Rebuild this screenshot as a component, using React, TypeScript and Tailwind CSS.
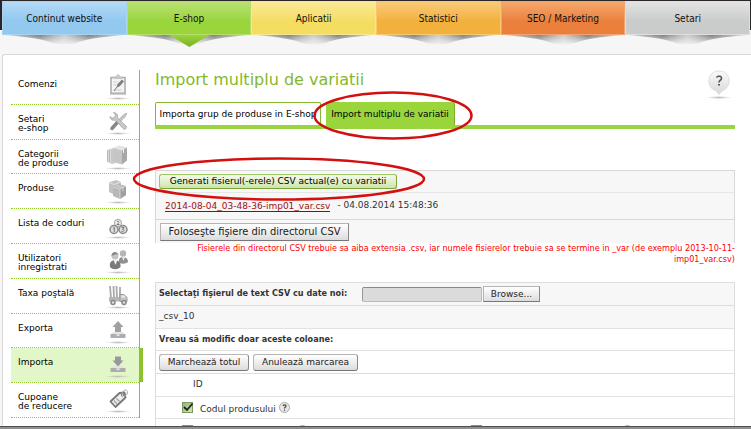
import type { ReactNode } from "react";
import clsx from "clsx";

const tabs = [
  { label: "Continut website", className: "border-[#a9d3f3] bg-linear-to-b from-[#b3d9f7] to-[#93c8ef] to-60%" },
  { label: "E-shop", className: "border-[#b4dd6e] bg-linear-to-b from-[#b9e070] to-[#9ad53c] to-60%", active: true },
  { label: "Aplicatii", className: "border-[#f9e694] bg-linear-to-b from-[#fae996] to-[#f5dd62] to-60%" },
  { label: "Statistici", className: "border-[#f6c876] bg-linear-to-b from-[#f8ca76] to-[#f2b13c] to-60%" },
  { label: "SEO / Marketing", className: "border-[#f3a371] bg-linear-to-b from-[#f5a86c] to-[#eb803c] to-60%" },
  { label: "Setari", className: "border-[#dedfde] bg-linear-to-b from-[#e2e3e2] to-[#cacccb] to-60%" },
];

function IconFrame({ children }: { children: ReactNode }) {
  return (
    <svg viewBox="0 0 30 32" className="h-8 w-[30px] shrink-0" fill="none" aria-hidden="true">
      <ellipse cx="15" cy="28.5" rx="13" ry="1.4" fill="url(#iconShadow)" />
      {children}
    </svg>
  );
}

const icons = {
  orders: (
    <>
      <path d="M8 7.500h14v16H8z" fill="#f4f4f4" stroke="#aaa" strokeWidth="1.500" />
      <path d="M7 22.500h16v2H7z" fill="#b5b5b5" />
      <path d="M11 6.500h8v2.500h-8z" fill="#c4c4c4" />
      <path d="M13.500 6.500a1.500 1.500 0 0 1 3 0" stroke="#aaa" />
      <path d="M10.500 12h4M10.500 15h3M10.500 20h8" stroke="#ccc" />
      <path d="m11 21 3-4" stroke="#777" />
      <path d="m13.500 17.500 1-3.500 4.500-4.500 2 2-4.500 5z" fill="#808080" />
    </>
  ),
  settings: (
    <>
      <path d="m9 23.500 7-8" stroke="#888" strokeWidth="3.500" strokeLinecap="round" />
      <path d="m14.500 16 6-6.500 3.500-1.500-1.500 3.500-6 6z" fill="#c4c4c4" stroke="#aaa" strokeWidth=".6" />
      <path
        d="M7 11.500c0 3 3 4.500 5.500 3.500l7.500 8.500c2 2 4.500-.5 3-2.500L14.500 13c1-3-1-5.500-4-5.500l2 2.500-1 2.500-2.500.5z"
        fill="#c8c8c8"
        stroke="#a5a5a5"
        strokeWidth=".8"
      />
    </>
  ),
  categories: (
    <>
      <path d="m4 10 6-2 4 2v13l-5 1-5-2z" fill="#dadada" />
      <path d="M4.500 10v12M6.500 9.500v13M9 9v15" stroke="#b8b8b8" />
      <path d="m10 8 6-2.500 8 2-5 3z" fill="#dedede" />
      <path d="m10 8 9 2.500v14L10 22z" fill="#c6c6c6" />
      <path d="m19 10.500 5-3v13l-5 4z" fill="#a8a8a8" />
      <path d="m13.500 7 7 2v4" stroke="#eee" />
    </>
  ),
  products: (
    <>
      <path d="m6 8.500 7-2.500 5 2v9l-6 4-6-3z" fill="#c2c2c2" />
      <path d="m6 8.500 5 2 7-2.500" stroke="#e0e0e0" />
      <path d="m10 13 6-3 7 2v9l-6 4-7-3z" fill="#b8b8b8" />
      <path d="m17 15 6-3v9l-6 4z" fill="#a0a0a0" />
      <path d="m10 13 7 2 6-3M17 15v10M13 11.500l7 2v4" stroke="#ddd" strokeWidth=".8" />
    </>
  ),
  codes: (
    <>
      <circle cx="15" cy="14" r="3.500" fill="#eee" stroke="#b5b5b5" strokeWidth="1.300" />
      <circle cx="11" cy="20.500" r="4" fill="#ddd" stroke="#8a8a8a" strokeWidth="1.500" />
      <circle cx="20" cy="20.500" r="4" fill="#ddd" stroke="#8a8a8a" strokeWidth="1.500" />
      <path d="M14 13c1-1.500 2.500 0 1.500 1L14 15.500h2.500M10 19.500l1.300-1v4.500M18.500 18.500h2.500l-1.500 2c2.500 0 1.500 2.500-1 2" stroke="#777" />
    </>
  ),
  users: (
    <>
      <circle cx="20" cy="9.500" r="3.200" fill="#b5b5b5" />
      <path d="M16 19c-1-5 2-6 4-6s5 1 5 5c-2 2-6 2-9 1z" fill="#909090" />
      <path d="m19 13 1.500 4 1.500-4z" fill="#eee" />
      <circle cx="12" cy="12" r="3.500" fill="#c4c4c4" />
      <path d="M8.500 12c0-5 6-5 7-1l-2-1z" fill="#888" />
      <path d="M7 23c-1-5 2-7 5-7s6 2 5.500 7c-3 3-8 3-10.500 0z" fill="#7a7a7a" />
      <path d="m10.500 16 2 5 2-5z" fill="#eee" />
    </>
  ),
  shipping: (
    <>
      <path d="M8 19 7 7M11 19l-.5-12M14 19l-.500-12M17 19V8" stroke="#aaa" strokeWidth="1.800" />
      <path d="M6 18h12v4.500H6z" fill="#b5b5b5" />
      <path d="M17 15.500h4l3 3v4h-7z" fill="#c6c6c6" stroke="#999" />
      <path d="M18.500 16.500H21l1.500 2h-4z" fill="#eee" />
      <circle cx="10" cy="23.500" r="2" fill="#ddd" stroke="#888" strokeWidth="1.500" />
      <circle cx="21" cy="23.500" r="2" fill="#ddd" stroke="#888" strokeWidth="1.500" />
    </>
  ),
  exporting: (
    <>
      <path d="m15 7 5.500 6H18v5.500h-6V13H9.500z" fill="#a0a0a0" />
      <path d="m10 18-2 2.500h14L20 18z" fill="#e4e4e4" />
      <path d="M7.500 20h15v4h-15z" fill="#adadad" />
      <path d="M12.500 20.500h5l-2.500 2z" fill="#eee" />
    </>
  ),
  importing: (
    <>
      <path d="m10 18-2 2.500h14L20 18z" fill="#e4e4e4" />
      <path d="M7.500 20h15v4h-15z" fill="#adadad" />
      <path d="M12.500 20.500h5l-2.500 2z" fill="#eee" />
      <path d="M12 8.500h6v4h2.500L15 18.500l-5.500-6H12z" fill="#999" />
    </>
  ),
  coupons: (
    <>
      <path d="m7.500 18.500 9-8.500 5-.5 1 5-10 9.500z" fill="#eee" stroke="#777" strokeWidth="1.800" strokeLinejoin="round" />
      <path d="m11 17.500 3 3.500M13.500 15.500l3 3" stroke="#aaa" strokeWidth="1.500" />
      <circle cx="19.500" cy="12" r="1.200" fill="#fff" stroke="#777" />
      <path d="M19.500 11.500c-1-4 4-6 5-3 .5 2-1 4-3 4" stroke="#aaa" />
    </>
  ),
};

const menu = [
  { label: <>Comenzi</>, icon: icons.orders },
  { label: <>Setari<br />e-shop</>, icon: icons.settings },
  { label: <>Categorii<br />de produse</>, icon: icons.categories },
  { label: <>Produse</>, icon: icons.products },
  { label: <>Lista de coduri</>, icon: icons.codes },
  { label: <>Utilizatori<br />inregistrati</>, icon: icons.users },
  { label: <>Taxa poştală</>, icon: icons.shipping },
  { label: <>Exporta</>, icon: icons.exporting },
  { label: <>Importa</>, icon: icons.importing, active: true },
  { label: <>Cupoane<br />de reducere</>, icon: icons.coupons },
];

function TopNav() {
  return (
    <nav className="grid grid-cols-6 pl-[2px] pr-px font-['DejaVu_Sans_Condensed','DejaVu_Sans',sans-serif] text-[10px] text-[#111]">
      {tabs.map((tab) => (
        <div key={tab.label}>
          <a href="#" className={clsx("flex h-[34px] items-center justify-center border", tab.className)}>
            {tab.label}
          </a>
          <svg viewBox="0 0 124 14" preserveAspectRatio="none" className="block h-[14px] w-full" aria-hidden="true">
            <path d="M2 0h120Q84 3 74 8Q62 11 50 8Q40 3 2 0z" fill="url(#tabShadow)" />
            <path d="M0 0h124v12H0z" fill="url(#tabFade)" />
            {tab.active && <path d="M42 0h40L62 12z" fill="url(#tabPointer)" />}
          </svg>
        </div>
      ))}
    </nav>
  );
}

function Sidebar() {
  return (
    <aside className="mt-[15px] ml-2 h-[348px] w-[129px] shrink-0 border-r border-[#8bbf30]">
      <ul className="grid h-full grid-rows-10">
        {menu.map((item, i) => (
          <li key={i} className="relative min-h-0 border-b border-dotted border-[#8ecb2b]">
            <a
              href="#"
              className={clsx(
                "flex h-full items-start justify-between overflow-hidden pr-[6px] pl-[7px] text-black",
                item.active && "bg-[#e2f7c8]"
              )}
            >
              <span className="pt-[10px] leading-[9px] whitespace-nowrap">{item.label}</span>
              <IconFrame>{item.icon}</IconFrame>
            </a>
            {item.active && <span className="absolute inset-y-0 -right-1 w-1 bg-[#8cc22f]" />}
          </li>
        ))}
      </ul>
    </aside>
  );
}

function Button({ children, className }: { children: ReactNode; className?: string }) {
  return (
    <button
      type="button"
      className={clsx(
        "border border-[#b5b5b5] border-r-[#888] border-b-[#777] bg-linear-to-b from-white to-[#dcdcdc] whitespace-nowrap text-[#222]",
        className
      )}
    >
      {children}
    </button>
  );
}

function Checkbox({ id, label }: { id: string; label?: string }) {
  return (
    <span className="grid size-[11px] shrink-0">
      <input
        id={id}
        type="checkbox"
        defaultChecked
        aria-label={label}
        className="col-start-1 row-start-1 size-[11px] appearance-none border border-[#7c9a62] bg-linear-to-br from-[#8fb56d] to-[#d3e6bf]"
      />
      <svg viewBox="0 0 11 11" className="pointer-events-none col-start-1 row-start-1 size-[11px] overflow-visible" fill="none" aria-hidden="true">
        <path d="m2 5 3 3L10.500 1.500" stroke="#222" strokeWidth="1.800" />
      </svg>
    </span>
  );
}

function HelpButton() {
  return (
    <button type="button" aria-label="?" className="size-[11px] shrink-0">
      <svg viewBox="0 0 11 11" className="size-[11px]" fill="none" aria-hidden="true">
        <circle cx="5.500" cy="5.500" r="5" fill="#e8e8e8" stroke="#aaa" />
        <path d="M4 4c.3-1.600 3.200-1.500 3 .1C6.900 5.200 5.500 5 5.500 6.600M5.500 7.500v1.200" stroke="#444" strokeWidth="1.200" />
      </svg>
    </button>
  );
}

function HelpPin() {
  return (
    <button type="button" aria-label="?" className="mr-[3px] h-[30px] w-[26px]">
      <svg viewBox="0 0 26 30" fill="none" aria-hidden="true">
        <ellipse cx="13" cy="27.500" rx="13" ry="1.500" fill="url(#iconShadow)" />
        <path d="M13 24.500 10 21C-1 17 1 1 13 1s14 16 3 20z" fill="url(#pinFill)" stroke="#dedede" />
        <path d="M10.500 7.500c1-2 5.500-1.500 5 1-.5 2-2.500 2-2.500 4" stroke="#555" strokeWidth="1.600" />
        <path d="M12 14h2v1.500h-2z" fill="#555" />
      </svg>
    </button>
  );
}

function GeneratedFiles() {
  return (
    <section className="mt-[41px] border border-b-0 border-[#d8d8d8] bg-[#f7f7f7]">
      <div className="flex h-[22px] items-center border-b border-[#e6e6e6] pl-[3px]">
        <button
          type="button"
          className="h-[15px] w-[238px] rounded-[3px] border border-[#9bc860] border-r-[#7ba336] border-b-[#7ba336] bg-linear-to-b from-[#f5faee] to-[#cde5a8] leading-none text-black"
        >
          Generati fisierul(-erele) CSV actual(e) cu variatii
        </button>
      </div>
      <div className="flex h-[27px] items-center gap-[7px] border-b border-[#d8d8d8] pl-[9px]">
        <a href="#" className="border-b border-[#a00] leading-[10px] text-[#a01010]">
          2014-08-04_03-48-36-imp01_var.csv
        </a>
        <span>- 04.08.2014 15:48:36</span>
      </div>
      <div className="flex h-[23px] items-center pl-1">
        <Button className="h-[18px] w-[189px] font-['DejaVu_Sans_Condensed','DejaVu_Sans',sans-serif] text-[11px] leading-none">
          Foloseşte fişiere din directorul CSV
        </Button>
      </div>
    </section>
  );
}

function ImportForm() {
  return (
    <form className="mt-[17px] border border-b-0 border-[#dcdcdc]">
      <div className="flex h-[23px] items-center border-b border-[#dcdcdc] bg-[#f7f7f7] pl-[3px]">
        <label
          htmlFor="csv"
          className="w-[203px] font-['DejaVu_Sans_Condensed','DejaVu_Sans',sans-serif] font-bold whitespace-nowrap"
        >
          Selectaţi fişierul de text CSV cu date noi:
        </label>
        <input
          id="csv"
          readOnly
          className="h-[15px] w-[120px] rounded-[2px] border border-[#bbb] border-t-[#888] border-l-[#999] bg-[#dbdbdb]"
        />
        <Button className="ml-px h-4 w-[57px] leading-none">Browse...</Button>
      </div>
      <div className="flex h-[23px] items-center border-b border-[#e2e2e2] bg-[#f7f7f7] pl-[3px]">_csv_10</div>
      <div className="flex h-[22px] items-center border-b border-[#e2e2e2] pl-[3px] font-['DejaVu_Sans_Condensed','DejaVu_Sans',sans-serif] font-bold">
        Vreau să modific doar aceste coloane:
      </div>
      <div className="flex h-[23px] items-center gap-1 border-b border-[#dcdcdc] pl-[3px]">
        <Button className="h-[17px] w-[90px] rounded-[3px] leading-none">Marchează totul</Button>
        <Button className="h-[17px] w-[105px] rounded-[3px] leading-none">Anulează marcarea</Button>
      </div>
      <div className="flex h-[23px] items-center border-b border-[#e2e2e2] pl-[37px]">ID</div>
      <div className="flex h-[22px] items-center border-b border-[#e2e2e2] pl-[26px]">
        <Checkbox id="code" />
        <label htmlFor="code" className="mr-[3px] ml-[7px] pt-1">
          Codul produsului
        </label>
        <HelpButton />
      </div>
      <div className="grid grid-cols-2 pt-[6px] pl-[26px]">
        <div className="flex gap-[104px]">
          <Checkbox id="col-1" label="1" />
          <HelpButton />
        </div>
        <div className="flex gap-[140px] pl-[13px]">
          <Checkbox id="col-2" label="2" />
          <HelpButton />
        </div>
      </div>
    </form>
  );
}

export default function App() {
  return (
    <div className="flex h-screen flex-col overflow-hidden bg-[#f6f6f6] font-['DejaVu_Sans',Verdana,sans-serif] text-[9px] text-[#333]">
      {/* Shared gradients */}
      <svg className="absolute size-0" aria-hidden="true">
        <defs>
          <radialGradient id="iconShadow">
            <stop offset="0" stopColor="#bbb" />
            <stop offset="1" stopColor="#bbb" stopOpacity="0" />
          </radialGradient>
          <linearGradient id="tabShadow">
            <stop offset="0" stopColor="#777" stopOpacity="0.200" />
            <stop offset="0.300" stopColor="#808080" />
            <stop offset="0.500" stopColor="#bbb" stopOpacity="0.700" />
            <stop offset="0.700" stopColor="#808080" />
            <stop offset="1" stopColor="#777" stopOpacity="0.200" />
          </linearGradient>
          <linearGradient id="tabFade" x2="0" y2="1">
            <stop offset="0" stopColor="#f6f6f6" stopOpacity="0" />
            <stop offset="0.800" stopColor="#f6f6f6" stopOpacity="0.900" />
            <stop offset="1" stopColor="#f6f6f6" />
          </linearGradient>
          <linearGradient id="tabPointer" x2="0" y2="1">
            <stop offset="0" stopColor="#9ad53c" />
            <stop offset="1" stopColor="#78b024" />
          </linearGradient>
          <linearGradient id="pinFill" x2="0" y2="1">
            <stop offset="0" stopColor="#fafafa" />
            <stop offset="1" stopColor="#d8d8d8" />
          </linearGradient>
        </defs>
      </svg>

      <header className="bg-linear-to-b from-[#2a2627] from-[30px] to-[#f6f6f6] to-[30px] pt-px">
        <TopNav />
      </header>

      <div className="mt-[5px] ml-[2px] flex min-h-0 flex-1 overflow-hidden rounded-tl-[3px] border-t border-l border-[#d8d8d8] bg-white">
        <Sidebar />

        <main className="relative mr-4 ml-[15px] min-w-0 flex-1">
          <div className="flex h-[47px] items-start justify-between pt-[15px]">
            <h1 className="text-[16px] leading-5 text-[#84b82b]">Import multiplu de variatii</h1>
            <HelpPin />
          </div>

          <div className="flex h-[27px] items-stretch gap-[5px] border-b-4 border-[#9ad53c] leading-none text-black">
            <a href="#" className="flex w-[166px] items-center justify-center rounded-t-[2px] border border-b-0 border-[#86b82e] whitespace-nowrap">
              Importa grup de produse in E-shop
            </a>
            <a
              href="#"
              className="flex w-[129px] items-center justify-center rounded-t-[2px] border-t border-r border-t-[#9ad53c] border-r-[#7dae2b] bg-[#9ad53c] whitespace-nowrap"
            >
              Import multiplu de variatii
            </a>
          </div>

          <GeneratedFiles />
          <p className="ml-[5px] text-right font-['DejaVu_Sans_Condensed','DejaVu_Sans',sans-serif] leading-[11px] text-[#f00]">
            Fisierele din directorul CSV trebuie sa aiba extensia .csv, iar numele fisierelor trebuie sa se termine in _var (de exemplu 2013-10-11-imp01_var.csv)
          </p>
          <ImportForm />

          {/* Hand-drawn marks over the tab and the button */}
          <svg className="pointer-events-none absolute top-0 left-0 size-full overflow-visible" fill="none" stroke="#d31010" strokeWidth="2.500" aria-hidden="true">
            <ellipse cx="238" cy="60.500" rx="78.500" ry="23" />
            <ellipse cx="124" cy="124" rx="145" ry="20.500" />
          </svg>
        </main>
      </div>

      <footer className="h-[3px] shrink-0 border-t border-[#505050] bg-[#8f8f8f]" />
    </div>
  );
}
